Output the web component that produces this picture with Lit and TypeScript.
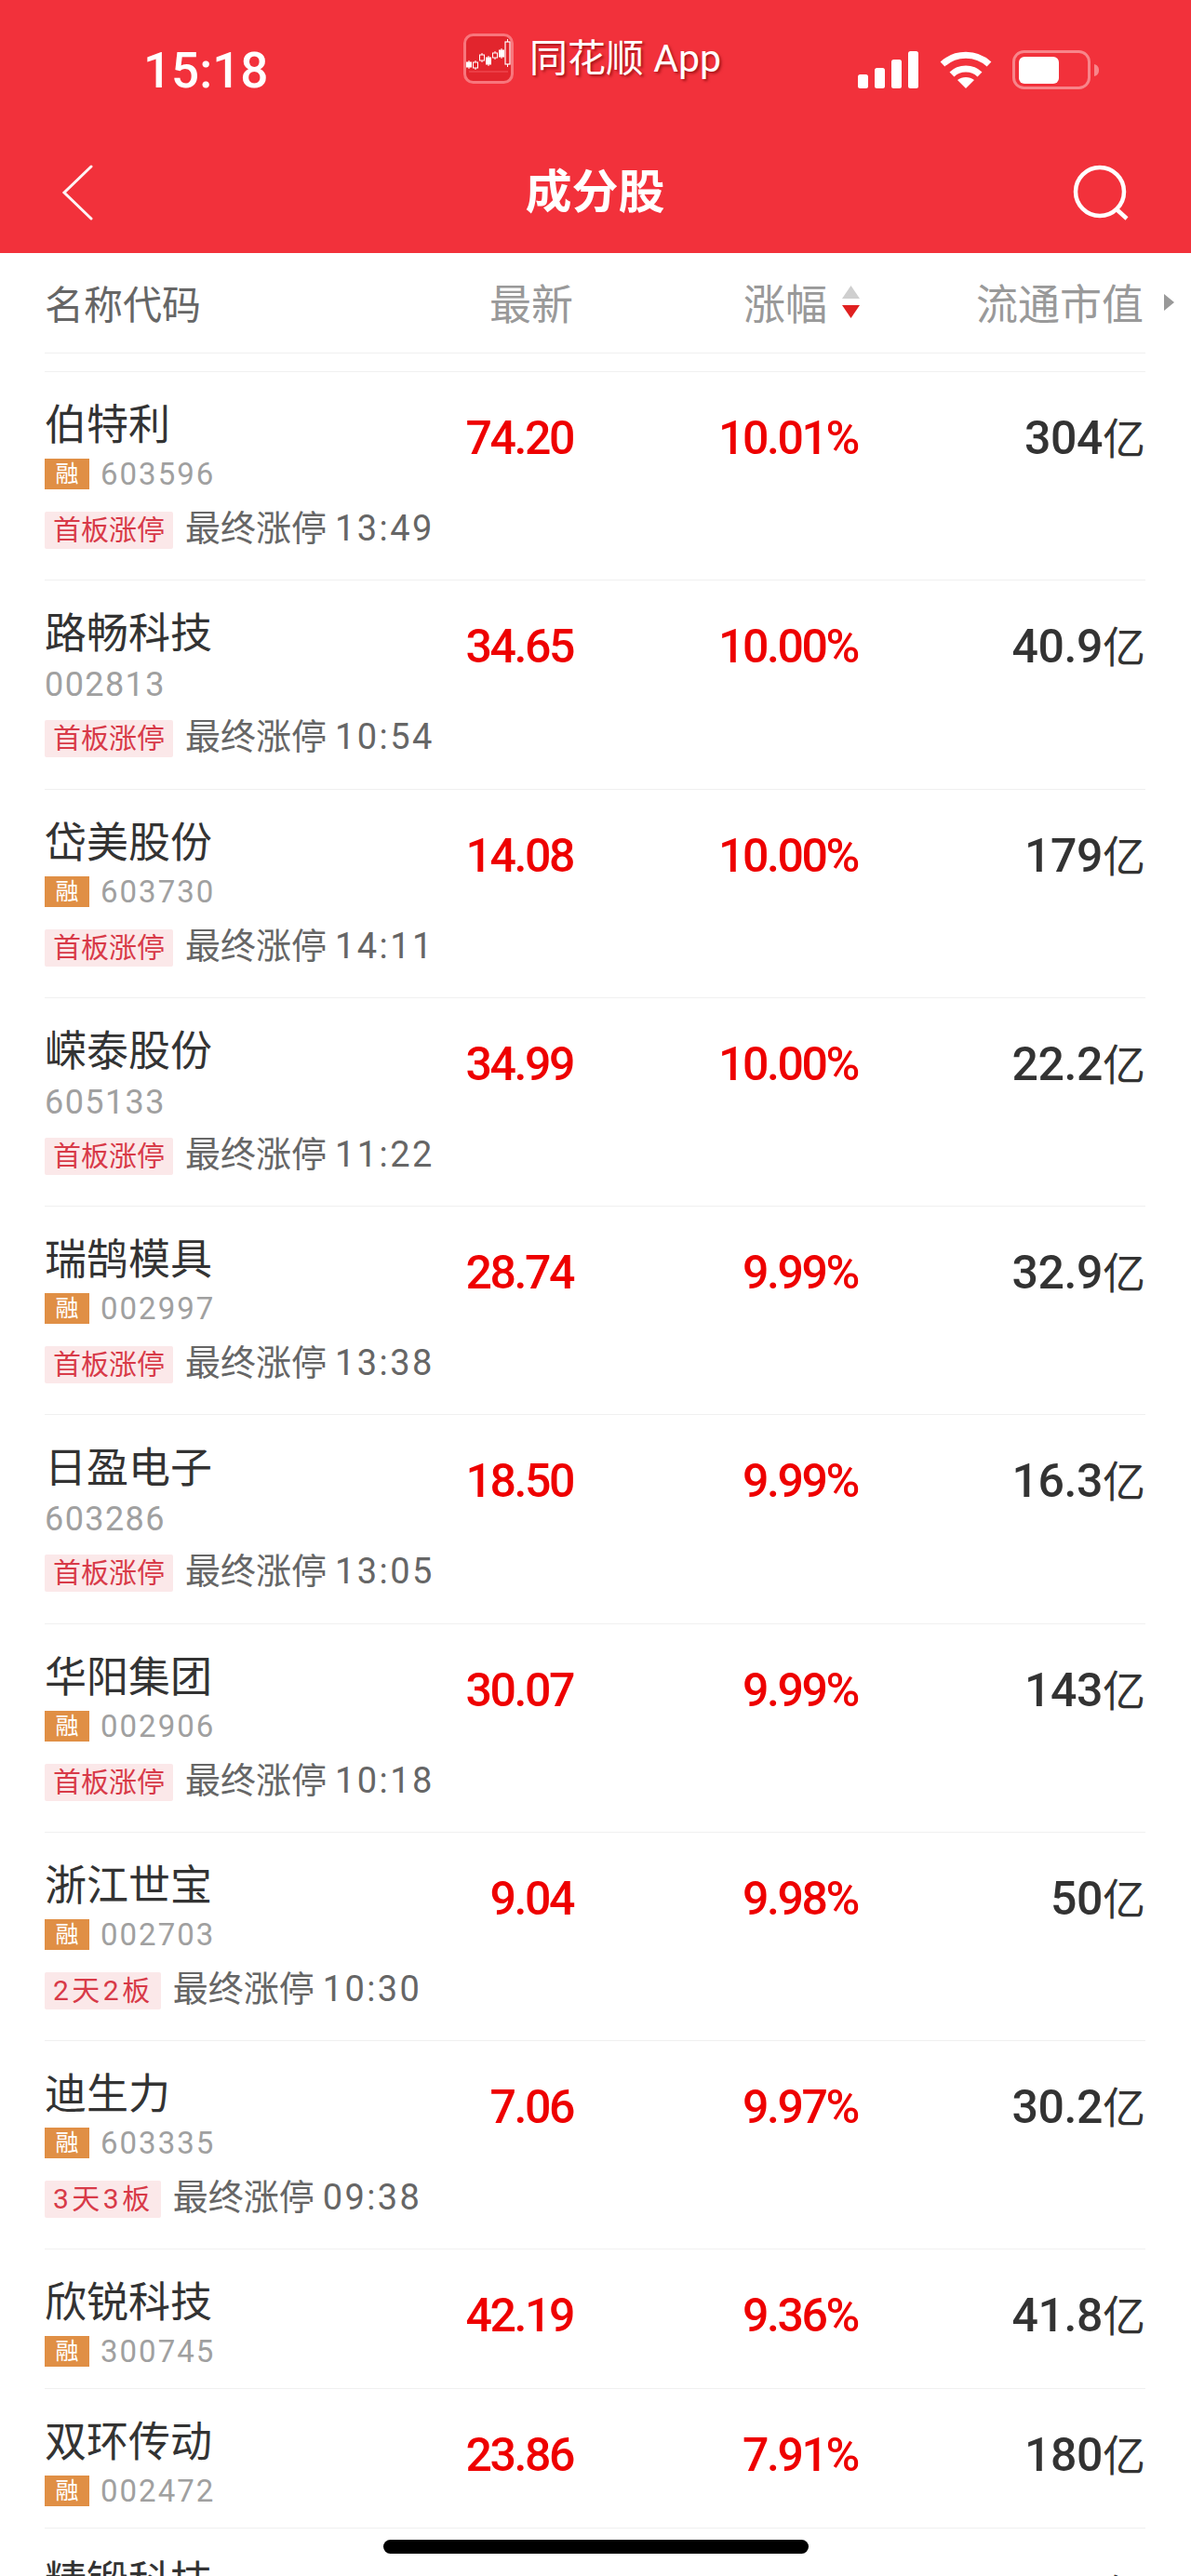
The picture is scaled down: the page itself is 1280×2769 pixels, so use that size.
import { LitElement, html, css, svg, nothing } from 'lit';
import { customElement } from 'lit/decorators.js';

interface Stock {
  name: string;
  code: string;
  rong: boolean;
  price: string;
  pct: string;
  cap: string;
  board?: string;
  time?: string;
}

const STOCKS: Stock[] = [
  { name: '伯特利', code: '603596', rong: true, price: '74.20', pct: '10.01%', cap: '304', board: '首板涨停', time: '13:49' },
  { name: '路畅科技', code: '002813', rong: false, price: '34.65', pct: '10.00%', cap: '40.9', board: '首板涨停', time: '10:54' },
  { name: '岱美股份', code: '603730', rong: true, price: '14.08', pct: '10.00%', cap: '179', board: '首板涨停', time: '14:11' },
  { name: '嵘泰股份', code: '605133', rong: false, price: '34.99', pct: '10.00%', cap: '22.2', board: '首板涨停', time: '11:22' },
  { name: '瑞鹄模具', code: '002997', rong: true, price: '28.74', pct: '9.99%', cap: '32.9', board: '首板涨停', time: '13:38' },
  { name: '日盈电子', code: '603286', rong: false, price: '18.50', pct: '9.99%', cap: '16.3', board: '首板涨停', time: '13:05' },
  { name: '华阳集团', code: '002906', rong: true, price: '30.07', pct: '9.99%', cap: '143', board: '首板涨停', time: '10:18' },
  { name: '浙江世宝', code: '002703', rong: true, price: '9.04', pct: '9.98%', cap: '50', board: '2天2板', time: '10:30' },
  { name: '迪生力', code: '603335', rong: true, price: '7.06', pct: '9.97%', cap: '30.2', board: '3天3板', time: '09:38' },
  { name: '欣锐科技', code: '300745', rong: true, price: '42.19', pct: '9.36%', cap: '41.8' },
  { name: '双环传动', code: '002472', rong: true, price: '23.86', pct: '7.91%', cap: '180' },
  { name: '精锻科技', code: '300258', rong: true, price: '14.60', pct: '7.41%', cap: '58.4' },
];

// candlesticks in the app logo: x, top, height, filled
const CANDLES: [number, number, number, boolean][] = [
  [6, 31, 5, true],
  [13, 31, 6, false],
  [20, 23, 6, false],
  [27, 26, 7, true],
  [34, 21, 5, false],
  [41, 18, 7, true],
];

@customElement('app-root')
export class AppRoot extends LitElement {
  static styles = css`
    :host {
      display: block;
      position: relative;
      height: 2769px;
      overflow: hidden;
      background: #fff;
      font-family: Roboto, 'Noto Sans CJK SC', sans-serif;
      color: #333;
    }

    svg {
      display: block;
    }

    .top {
      background: #f2313b;
      height: 272px;
      color: #fff;
    }

    .status {
      display: grid;
      grid-template-columns: 498px 424px 1fr;
      height: 150px;
    }

    .clock {
      padding: 44px 0 0 154px;
      font-size: 53px;
      line-height: 64px;
      font-weight: 500;
    }

    .carrier {
      display: flex;
      gap: 17px;
      padding-top: 36px;
      font-size: 41px;
      line-height: 50px;
      text-shadow: 2px 2px 3px rgba(110, 0, 0, 0.6);
    }

    .carrier span {
      padding-top: 2px;
      white-space: nowrap;
    }

    .sys {
      display: flex;
      gap: 22px;
      padding-top: 54px;
    }

    .nav {
      display: flex;
      justify-content: space-between;
      align-items: center;
      height: 114px;
      padding: 0 67px 0 66px;
    }

    .back {
      width: 60px;
    }

    .nav h1 {
      margin: 0;
      font-size: 50px;
      line-height: 60px;
      font-weight: 700;
    }

    .thead,
    .row {
      display: grid;
      grid-template-columns: 340px 228px 306px 307px;
      margin: 0 49px 0 48px;
      padding-right: 2px;
      border-bottom: 1px solid #f0f0f0;
    }

    .thead {
      height: 105px;
      padding-bottom: 2px;
      align-items: center;
      font-size: 45px;
      color: #999;
    }

    .thead > div {
      display: flex;
      justify-content: flex-end;
      align-items: center;
    }

    .thead > .first {
      justify-content: flex-start;
      color: #666;
      font-size: 42px;
    }

    .sort {
      display: flex;
      margin: 0 -2px 0 16px;
    }

    .more {
      display: flex;
      margin: 0 -33px 0 22px;
    }

    .spacer {
      height: 19px;
      margin: 0 49px 0 48px;
      border-bottom: 1px solid #f0f0f0;
    }

    .info {
      padding: 32px 0 33.25px;
    }

    .row.short .info {
      padding-bottom: 23px;
    }

    .name {
      font-size: 45px;
      line-height: 52px;
    }

    .meta {
      box-sizing: border-box;
      display: flex;
      align-items: center;
      height: 33px;
      margin-top: 9px;
      font-size: 33px;
      letter-spacing: 2px;
      color: #a0a0a0;
    }

    .meta.plain {
      font-size: 36px;
      letter-spacing: 1.4px;
      padding-top: 5px;
    }

    .rong {
      width: 48px;
      height: 33px;
      margin-right: 12px;
      background: #e08f45;
      color: #fff;
      font-size: 25px;
      line-height: 33px;
      text-align: center;
      letter-spacing: 0;
    }

    .limit {
      display: flex;
      align-items: flex-start;
      margin-top: 24px;
      height: 40px;
      font-size: 38px;
      line-height: 37px;
      color: #666;
      white-space: nowrap;
    }

    .board {
      height: 40px;
      margin-right: 13px;
      padding: 0 9px;
      background: #fbe8e9;
      border-radius: 2px;
      color: #d83a48;
      font-size: 30px;
      line-height: 40px;
    }

    .board.days {
      padding: 0 8px 0 9px;
      letter-spacing: 3.5px;
    }

    .time {
      margin-left: 9px;
      letter-spacing: 2.4px;
    }

    .val {
      padding-top: 43px;
      font-size: 50px;
      line-height: 56px;
      font-weight: 500;
      text-align: right;
      letter-spacing: -2.4px;
      color: #ee0000;
    }

    .val.cap {
      color: #333;
      letter-spacing: -0.4px;
    }

    .val.cap span {
      margin-right: -2px;
      font-size: 46px;
      font-weight: 400;
      letter-spacing: 0;
    }

    .home {
      position: absolute;
      left: 412px;
      top: 2730px;
      width: 457px;
      height: 15px;
      background: #000;
      border-radius: 8px;
    }
  `;

  private renderLogo() {
    return svg`
      <svg width="54" height="54" viewBox="0 0 54 54">
        <rect x="1.5" y="1.5" width="51" height="51" rx="9" fill="#e2252d" stroke="#f8767c" stroke-width="3" />
        <path d="M6 41H48" stroke="#f4555c" stroke-width="1" />
        ${CANDLES.map(
          ([x, y, h, filled]) => svg`
            <path d="M${x} ${y - 2}V${y + h + 2}" stroke="#fff" stroke-width="1" />
            <rect x=${x - 2.5} y=${y} width="5" height=${h} fill=${filled ? '#fff' : '#e2252d'} stroke="#fff" stroke-width="1" />
          `
        )}
        <path d="M47.5 6V36" stroke="#fff" stroke-width="1" />
        <rect x="45" y="9" width="5" height="24" fill="#e2252d" stroke="#fff" stroke-width="1.2" />
      </svg>
    `;
  }

  private renderSysIcons() {
    return html`
      <svg width="65" height="42" viewBox="0 0 65 42" fill="#fff">
        <rect x="0" y="26" width="11" height="15" rx="2.5" />
        <rect x="18" y="19" width="11" height="22" rx="2.5" />
        <rect x="36" y="10" width="11" height="31" rx="2.5" />
        <rect x="54" y="1" width="11" height="40" rx="2.5" />
      </svg>
      <svg width="58" height="42" viewBox="0 0 58 42" fill="none" stroke="#fff" stroke-width="7">
        <path d="M4 15C18 2 40 2 54 15" />
        <path d="M14 26C22 18 36 18 44 26" />
        <path d="M20 32C25 28 33 28 38 32L29 41Z" fill="#fff" stroke="none" />
      </svg>
      <svg style="margin-left:-1px" width="94" height="42" viewBox="0 0 94 42">
        <rect x="1.5" y="1.5" width="81" height="39" rx="11" fill="none" stroke="#f8858a" stroke-width="3" />
        <rect x="7" y="7" width="43" height="29" rx="6" fill="#fff" />
        <path d="M88 15C92 16 93 19 93 21.500C93 24 92 27 88 28Z" fill="#f8858a" />
      </svg>
    `;
  }

  private renderRow(s: Stock) {
    const days = s.board && s.board !== '首板涨停';
    return html`
      <div class="row ${s.time ? '' : 'short'}">
        <div class="info">
          <div class="name">${s.name}</div>
          <div class="meta ${s.rong ? '' : 'plain'}">
            ${s.rong ? html`<div class="rong">融</div>` : nothing}${s.code}
          </div>
          ${s.time
            ? html`<div class="limit">
                <div class="board ${days ? 'days' : ''}">${s.board}</div>
                最终涨停<span class="time">${s.time}</span>
              </div>`
            : nothing}
        </div>
        <div class="val">${s.price}</div>
        <div class="val">${s.pct}</div>
        <div class="val cap">${s.cap}<span>亿</span></div>
      </div>
    `;
  }

  render() {
    return html`
      <div class="top">
        <div class="status">
          <div class="clock">15:18</div>
          <div class="carrier">${this.renderLogo()}<span>同花顺 App</span></div>
          <div class="sys">${this.renderSysIcons()}</div>
        </div>
        <div class="nav">
          <div class="back">
            <svg width="34" height="60" viewBox="0 0 34 60" fill="none" stroke="#fff" stroke-width="3" stroke-linecap="round" opacity="0.95">
              <path d="M32 2L3 30L32 58" />
            </svg>
          </div>
          <h1>成分股</h1>
          <svg width="60" height="60" viewBox="0 0 60 60" fill="none" stroke="#fff" stroke-width="4.500">
            <circle cx="29" cy="29" r="26" />
            <path d="M47 48L58 58" />
          </svg>
        </div>
      </div>
      <div class="thead">
        <div class="first">名称代码</div>
        <div>最新</div>
        <div>
          涨幅
          <span class="sort">
            <svg width="19" height="35" viewBox="0 0 19 35">
              <path d="M9.500 0L19 14H0Z" fill="#cfcfcf" />
              <path d="M0 21H19L9.500 35Z" fill="#e02020" />
            </svg>
          </span>
        </div>
        <div>
          流通市值
          <span class="more">
            <svg width="11" height="18" viewBox="0 0 11 18"><path d="M0 0L11 9L0 18Z" fill="#999" /></svg>
          </span>
        </div>
      </div>
      <div class="spacer"></div>
      ${STOCKS.map(s => this.renderRow(s))}
      <div class="home"></div>
    `;
  }
}

declare global {
  interface HTMLElementTagNameMap {
    'app-root': AppRoot;
  }
}
